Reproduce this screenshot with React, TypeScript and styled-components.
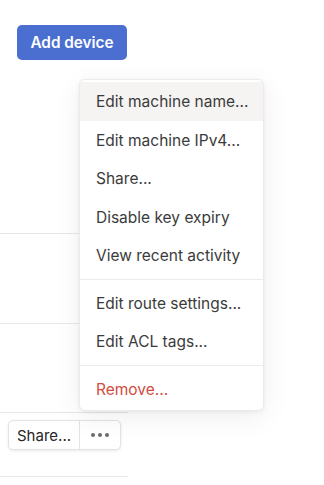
import React from 'react';
import styled, { createGlobalStyle } from 'styled-components';

const GlobalStyle = createGlobalStyle`
  html, body {
    margin: 0;
    background: #fff;
    font-family: Inter, "Noto Sans", sans-serif;
    -webkit-font-smoothing: antialiased;
  }
`;

const Page = styled.div`
  width: 128px;
`;

const Header = styled.div`
  height: 234px;
  padding: 25px 0 0 17px;
  box-sizing: border-box;
  border-bottom: 1px solid #e7e7e7;
`;

const PrimaryButton = styled.button`
  height: 35px;
  width: 110px;
  border: none;
  border-radius: 5px;
  background: #4a6fd1;
  color: #fff;
  font-family: Inter, sans-serif;
  font-size: 15.3px;
  font-weight: 600;
  padding: 0;
  cursor: pointer;
`;

interface RowProps {
  h: number;
}

const Row = styled.div<RowProps>`
  height: ${p => p.h}px;
  border-bottom: 1px solid #e7e7e7;
`;

const ActionRow = styled(Row)`
  padding: 7px 0 0 8px;
`;

const ButtonGroup = styled.div`
  display: inline-flex;
  height: 28px;
  border: 1px solid #e3e3e3;
  border-radius: 5px;
  box-shadow: 0 1px 3px rgba(0, 0, 0, 0.09);
  background: #fff;
`;

const GroupButton = styled.button`
  font-family: Inter, sans-serif;
  font-size: 15px;
  color: #262626;
  background: none;
  border: none;
  padding: 0 8px 0 8px;
  width: 71px;
  text-align: left;
  border-right: 1px solid #e3e3e3;
  cursor: pointer;
`;

const MoreWrap = styled.div`
  position: relative;
  width: 40px;
  display: flex;
  align-items: center;
  justify-content: center;
`;

const Dots = styled.span`
  display: flex;
  gap: 3px;
  span {
    width: 4px;
    height: 4px;
    border-radius: 50%;
    background: #6d6d6d;
  }
`;

const Menu = styled.div`
  position: absolute;
  left: -1px;
  bottom: calc(100% + 10px);
  width: 185px;
  box-sizing: border-box;
  padding: 2px 0;
  background: #fff;
  border: 1px solid #ebebeb;
  border-radius: 6px;
  box-shadow: 0 6px 28px rgba(0, 0, 0, 0.07), 0 1px 4px rgba(0, 0, 0, 0.06);
  z-index: 5;
`;

interface ItemProps {
  active?: boolean;
  danger?: boolean;
}

const MenuItem = styled.div<ItemProps>`
  padding: 9px 16px 8px;
  line-height: 21.5px;
  font-size: 15.5px;
  white-space: nowrap;
  color: ${p => (p.danger ? '#d24c40' : '#3b3b3b')};
  background: ${p => (p.active ? '#f6f4f3' : 'transparent')};
  cursor: pointer;
`;

const Separator = styled.div`
  height: 1px;
  margin: 4px 0;
  background: #ebebeb;
`;

const groups = [
  ['Edit machine name...', 'Edit machine IPv4...', 'Share...', 'Disable key expiry', 'View recent activity'],
  ['Edit route settings...', 'Edit ACL tags...'],
];

const App: React.FC = () => (
  <>
    <GlobalStyle />
    <Page>
      <Header>
        <PrimaryButton>Add device</PrimaryButton>
      </Header>
      <Row h={89} />
      <Row h={88} />
      <ActionRow h={56}>
        <ButtonGroup>
          <GroupButton>Share...</GroupButton>
          <MoreWrap>
            <Dots><span /><span /><span /></Dots>
            <Menu>
              {groups.map((g, gi) => (
                <React.Fragment key={gi}>
                  {g.map((label, i) => (
                    <MenuItem key={label} active={gi === 0 && i === 0}>{label}</MenuItem>
                  ))}
                  <Separator />
                </React.Fragment>
              ))}
              <MenuItem danger>Remove...</MenuItem>
            </Menu>
          </MoreWrap>
        </ButtonGroup>
      </ActionRow>
    </Page>
  </>
);

export default App;
